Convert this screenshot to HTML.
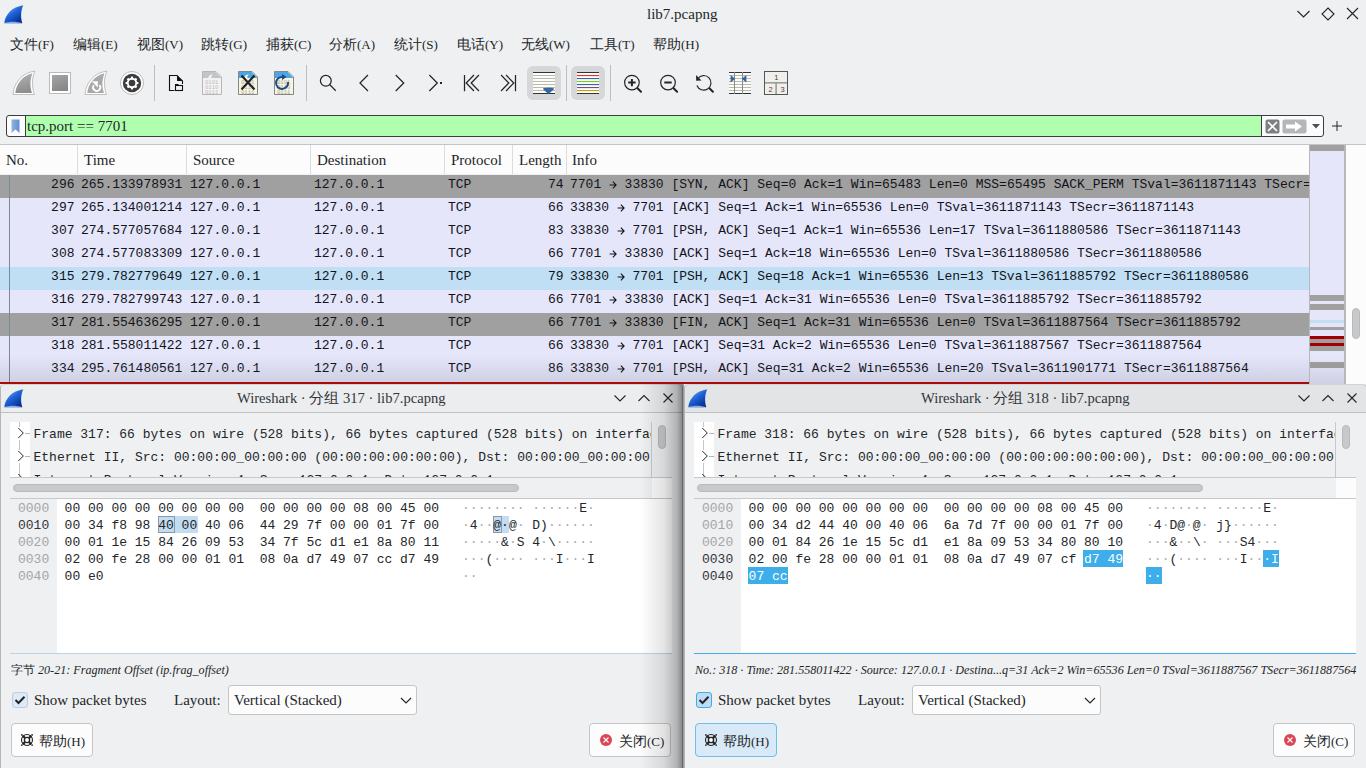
<!DOCTYPE html>
<html><head><meta charset="utf-8">
<style>
*{box-sizing:border-box;margin:0;padding:0}
html,body{width:1366px;height:768px;overflow:hidden;background:#eff0f1;font-family:"Liberation Serif",serif;color:#232629;position:relative}
.a{position:absolute}
.m{font-family:"Liberation Mono",monospace;font-size:13px;white-space:pre;line-height:15px}
.s{font-family:"Liberation Serif",serif;white-space:pre}
.menu span{position:absolute;top:37px;font-size:14px;white-space:pre;line-height:16px}
.row{position:absolute;left:0;width:1310px;height:23px;background:#e6e6fa;color:#12141a}
.row .m{position:absolute;top:2px}
.hdr{position:absolute;top:145px;height:29px;background:#fcfcfc;font-size:15px}
.hdr span{position:absolute;top:7px;white-space:pre}
.hdr i{position:absolute;top:0;width:1px;height:29px;background:#dcdcdc}
.sep{position:absolute;top:65px;width:1px;height:36px;background:#bcbebf}
svg{position:absolute;overflow:visible}
svg.ar{position:relative;vertical-align:-1.5px}
</style></head><body>
<svg style="left:4px;top:5px" width="20" height="19" viewBox="0 0 20 19">
<defs><linearGradient id="fin0" x1="0.2" y1="0" x2="0.9" y2="0.9"><stop offset="0" stop-color="#6ab0f8"/><stop offset="0.45" stop-color="#1f63d8"/><stop offset="1" stop-color="#022a8c"/></linearGradient></defs>
<path d="M0.3 18.3 C1 9.5 8 2 19.3 0.3 C17 5 16.3 12 18.3 18.3 Z" fill="url(#fin0)"/>
<path d="M0.3 18.3 C5 16.3 13 16.3 18.3 18.3 Z" fill="#a9c4ee" opacity="0.8"/>
</svg><div class="a s" style="left:647px;top:5px;font-size:15px;line-height:18px">lib7.pcapng</div><svg style="left:1296px;top:6px" width="64" height="16" viewBox="0 0 64 16" fill="none" stroke="#232629" stroke-width="1.1">
<path d="M1.5 5 L7.5 11 L13.5 5"/>
<path d="M32 2 L38 8 L32 14 L26 8 Z"/>
<path d="M51 2 L62 13 M62 2 L51 13"/>
</svg><div class="menu"><span style="left:10px">文件<b style="font-weight:normal;font-size:13px">(F)</b></span><span style="left:73px">编辑<b style="font-weight:normal;font-size:13px">(E)</b></span><span style="left:137px">视图<b style="font-weight:normal;font-size:13px">(V)</b></span><span style="left:201px">跳转<b style="font-weight:normal;font-size:13px">(G)</b></span><span style="left:266px">捕获<b style="font-weight:normal;font-size:13px">(C)</b></span><span style="left:329px">分析<b style="font-weight:normal;font-size:13px">(A)</b></span><span style="left:394px">统计<b style="font-weight:normal;font-size:13px">(S)</b></span><span style="left:457px">电话<b style="font-weight:normal;font-size:13px">(Y)</b></span><span style="left:521px">无线<b style="font-weight:normal;font-size:13px">(W)</b></span><span style="left:590px">工具<b style="font-weight:normal;font-size:13px">(T)</b></span><span style="left:653px">帮助<b style="font-weight:normal;font-size:13px">(H)</b></span></div><svg style="left:0;top:60px" width="800" height="45" viewBox="0 60 800 45">
<defs>
<linearGradient id="gfin" x1="0" y1="0" x2="0.3" y2="1"><stop offset="0" stop-color="#b4b4b4"/><stop offset="1" stop-color="#8e8e8e"/></linearGradient>
<linearGradient id="gsq" x1="0" y1="0" x2="0.4" y2="1"><stop offset="0" stop-color="#a6a6a6"/><stop offset="1" stop-color="#888"/></linearGradient>
</defs>
<!-- 1 fin -->
<path d="M13 94.5 C13.5 84 21 73 35 71 C32 77 31.5 87 34.5 94.5 Z" fill="#fff" stroke="#b0b0b0" stroke-width="0.8"/>
<path d="M15.3 93 C16 85 22 75.5 32.5 73.3 C30 79 29.7 87 32 93 Z" fill="url(#gfin)"/>
<!-- 2 square -->
<rect x="49.5" y="72.5" width="21" height="21" fill="#fff" stroke="#b4b4b4" stroke-width="0.9"/>
<rect x="52" y="75" width="16" height="16" fill="url(#gsq)"/>
<!-- 3 fin restart -->
<path d="M85 94.5 C85.5 84 93 73 107 71 C104 77 103.5 87 106.5 94.5 Z" fill="#fff" stroke="#b0b0b0" stroke-width="0.8"/>
<path d="M87.3 93 C88 85 94 75.5 104.5 73.3 C102 79 101.7 87 104 93 Z" fill="#a9a9a9"/>
<path d="M99.46 84.99 A3.6 3.6 0 1 1 93.75 85.24" fill="none" stroke="#fff" stroke-width="1.8"/>
<path d="M91.8 81.2 L97.9 81.2 L97.7 87.6 Z" fill="#fff"/>
<!-- 4 gear -->
<circle cx="132" cy="83" r="11.5" fill="#fff" stroke="#a8a8a8" stroke-width="0.8"/>
<circle cx="132" cy="83" r="9.2" fill="#3c3c3c"/>
<g fill="#fff">
<circle cx="132" cy="83" r="5.2"/>
<g><rect x="130.9" y="76.6" width="2.2" height="12.8"/><rect x="125.6" y="81.9" width="12.8" height="2.2"/></g>
<g transform="rotate(45 132 83)"><rect x="130.9" y="76.6" width="2.2" height="12.8"/><rect x="125.6" y="81.9" width="12.8" height="2.2"/></g>
</g>
<circle cx="132" cy="83" r="3.3" fill="#3c3c3c"/>
<!-- sep -->
<rect x="154" y="65" width="1" height="36" fill="#bcbebf"/>
<!-- 5 open -->
<path d="M174.5 90.5 H169.5 V75.5 H177 L182.5 81 V84" fill="none" stroke="#111" stroke-width="1.1"/>
<path d="M177 75.5 L182.5 81 H177 Z" fill="#111"/>
<rect x="175.5" y="85.5" width="7" height="5" fill="none" stroke="#111" stroke-width="1.1"/>
<rect x="175" y="84" width="3.5" height="2" fill="#111"/>
<!-- 6 doc gray -->
<path d="M202.5 71.5 H216 L221.5 77 V94.5 H202.5 Z" fill="#f2f2f2" stroke="#b0b0b0" stroke-width="0.9"/>
<path d="M203 72 H215.5 L221 77.5 V78 H203 Z" fill="#c4c4c4"/>
<path d="M208 78 C209 75 211 74 213 74.5 C211.5 75.5 211 77 211.5 78 Z" fill="#f2f2f2"/>
<g font-family="Liberation Mono" font-size="5.6" fill="#c0c0c0"><text x="205" y="83.5">0101</text><text x="205" y="88.5">0110</text><text x="205" y="93.5">0111</text></g>
<!-- 7 doc close -->
<path d="M238.5 71.5 H252 L257.5 77 V94.5 H238.5 Z" fill="#f7f5e2" stroke="#7a7a7a" stroke-width="0.9"/>
<path d="M239 72 H251.5 L257 77.5 V78 H239 Z" fill="#4aa6e6"/>
<path d="M244 78 C245 75 247 74 249 74.5 C247.5 75.5 247 77 247.5 78 Z" fill="#f7f5e2"/>
<g font-family="Liberation Mono" font-size="5.6" fill="#a8a89a"><text x="241" y="83.5">0101</text><text x="241" y="88.5">0110</text><text x="241" y="93.5">0111</text></g>
<path d="M241.5 75.5 L254.5 89.5 M254.5 75.5 L241.5 89.5" stroke="#222" stroke-width="2.1"/>
<!-- 8 doc reload -->
<path d="M274.5 71.5 H288 L293.5 77 V94.5 H274.5 Z" fill="#f7f5e2" stroke="#7a7a7a" stroke-width="0.9"/>
<path d="M275 72 H287.5 L293 77.5 V78 H275 Z" fill="#4aa6e6"/>
<g font-family="Liberation Mono" font-size="5.6" fill="#a8a89a"><text x="277" y="83.5">0101</text><text x="277" y="88.5">0110</text><text x="277" y="93.5">0111</text></g>
<path d="M288 82 A6 6 0 1 1 283 77" fill="none" stroke="#204a87" stroke-width="2"/>
<path d="M282 74 L286.5 77 L282 80 Z" fill="#204a87"/>
<!-- sep -->
<rect x="306" y="65" width="1" height="36" fill="#bcbebf"/>
<g fill="none" stroke="#232629" stroke-width="1.25" stroke-linecap="square">
<!-- 9 find -->
<circle cx="325.8" cy="80.8" r="5.4"/>
<path d="M329.8 84.8 L335.3 90.3"/>
<!-- 10 < -->
<path d="M367.5 75.5 L360 83 L367.5 90.5"/>
<!-- 11 > -->
<path d="M396.2 75.5 L403.7 83 L396.2 90.5"/>
<!-- 12 >. -->
<path d="M429.8 75.5 L437.3 83 L429.8 90.5"/>
<!-- 13 |<< -->
<path d="M464.5 75.5 V90.5 M473.5 75.5 L466.2 83 L473.5 90.5 M478.5 75.5 L471.2 83 L478.5 90.5"/>
<!-- 14 >>| -->
<path d="M515.5 75.5 V90.5 M501.5 75.5 L508.8 83 L501.5 90.5 M506.5 75.5 L513.8 83 L506.5 90.5"/>
</g>
<rect x="440" y="82" width="2" height="2" fill="#232629"/>
<!-- 15 autoscroll pressed -->
<rect x="527" y="66" width="34" height="34" rx="6" fill="#d6d7d9"/>
<rect x="533" y="72" width="22" height="22" fill="#fcfcfa"/>
<g fill="#b9b9ad"><rect x="533" y="75" width="22" height="1"/><rect x="533" y="78" width="22" height="1"/><rect x="533" y="81" width="22" height="1"/><rect x="533" y="84" width="22" height="1"/><rect x="533" y="87" width="22" height="1"/><rect x="533" y="90" width="22" height="1"/></g>
<rect x="533" y="72" width="22" height="1" fill="#2e3436"/><rect x="533" y="93" width="22" height="1" fill="#2e3436"/>
<path d="M543 88.5 C543 87.5 554 87.5 554 88.5 C554 90 550.5 92 548.5 94 C546.5 92 543 90 543 88.5 Z" fill="#3465a4"/>
<!-- sep -->
<rect x="566" y="65" width="1" height="36" fill="#bcbebf"/>
<!-- 16 colorize pressed -->
<rect x="571" y="66" width="34" height="34" rx="6" fill="#d6d7d9"/>
<rect x="577" y="72" width="22" height="22" fill="#fcfcfa"/>
<rect x="577" y="72" width="22" height="1" fill="#2e3436"/>
<rect x="577" y="75" width="22" height="1.1" fill="#ef2929"/>
<rect x="577" y="78" width="22" height="1.1" fill="#3465a4"/>
<rect x="577" y="81" width="22" height="1.1" fill="#73d216"/>
<rect x="577" y="84" width="22" height="1.1" fill="#3465a4"/>
<rect x="577" y="87" width="22" height="1.1" fill="#75507b"/>
<rect x="577" y="90" width="22" height="1.1" fill="#c4a000"/>
<rect x="577" y="93" width="22" height="1" fill="#2e3436"/>
<!-- sep -->
<rect x="610" y="65" width="1" height="36" fill="#bcbebf"/>
<!-- 17-19 zoom -->
<g fill="none" stroke="#232629" stroke-width="1.2">
<circle cx="631.9" cy="82.6" r="7.3"/>
<circle cx="668" cy="82.6" r="7.3"/>
<path d="M696.9 85.5 A7.3 7.3 0 1 0 697.8 78.5"/>
</g>
<g stroke="#232629" stroke-width="2" stroke-linecap="round">
<path d="M637.5 88.2 L641 91.7 M673.6 88.2 L677.1 91.7 M709.4 88.2 L712.9 91.7"/>
<path d="M628.2 82.6 H635.6 M631.9 78.9 V86.3 M664.3 82.6 H671.7" stroke-linecap="butt"/>
</g>
<path d="M696 75 L696.2 80.8 L701.5 80.6 Z" fill="#232629"/>
<!-- 20 resize cols -->
<rect x="729" y="72" width="22" height="22" fill="#fcfcfa"/>
<g fill="#b9b9ad"><rect x="729" y="75" width="22" height="1"/><rect x="729" y="78" width="22" height="1"/><rect x="729" y="81" width="22" height="1"/><rect x="729" y="84" width="22" height="1"/><rect x="729" y="87" width="22" height="1"/><rect x="729" y="90" width="22" height="1"/></g>
<rect x="729" y="72" width="22" height="1" fill="#2e3436"/><rect x="729" y="93" width="22" height="1" fill="#2e3436"/>
<rect x="734" y="72" width="1" height="22" fill="#888a85"/><rect x="742" y="72" width="1" height="22" fill="#888a85"/>
<path d="M730.6 75 L735.2 78.8 L730.6 82.6 Z M746.4 75 L741.8 78.8 L746.4 82.6 Z" fill="#3465a4"/>
<!-- 21 layout -->
<rect x="764.5" y="71.5" width="23" height="23" fill="#f0efec" stroke="#555753" stroke-width="1"/>
<rect x="765" y="82" width="22" height="1.6" fill="#9a9c98"/>
<rect x="775.3" y="83" width="1.6" height="11" fill="#9a9c98"/>
<g font-family="Liberation Sans" font-size="7.5" fill="#444"><text x="774.2" y="80">1</text><text x="768.5" y="91.5">2</text><text x="780.5" y="91.5">3</text></g>
</svg>
<div class="a" style="left:6px;top:115px;width:1318px;height:22px;border:1px solid #3b3d3f;border-radius:3px;background:#fcfcfc;overflow:hidden">
 <div class="a" style="left:18px;top:0;width:1237px;height:20px;background:#afffaf;border-left:1px solid #3b3d3f;border-right:1px solid #3b3d3f"></div>
 <svg style="left:4px;top:3px" width="10" height="15" viewBox="0 0 10 15"><defs><linearGradient id="bm" x1="0" y1="0" x2="1" y2="0"><stop offset="0" stop-color="#8fb4e3"/><stop offset="1" stop-color="#5f8fcf"/></linearGradient></defs><path d="M0.5 0.5 H8.5 V14 L4.5 10.5 L0.5 14 Z" fill="url(#bm)"/></svg>
 <div class="a s" style="left:20px;top:1px;font-size:15px;line-height:19px;color:#232629">tcp.port == 7701</div>
 <svg style="left:1258px;top:3px" width="16" height="15" viewBox="0 0 16 15"><rect x="0.5" y="0.5" width="14" height="14" rx="2" fill="#7e8082"/><path d="M3 3 L12 12 M12 3 L3 12" stroke="#fff" stroke-width="1.6"/></svg>
 <svg style="left:1275px;top:3px" width="25" height="15" viewBox="0 0 25 15"><rect x="0.5" y="0.5" width="24" height="14" rx="2" fill="#b4b6b8"/><path d="M4 5.5 H13 V2.5 L20 7.5 L13 12.5 V9.5 H4 Z" fill="#fff"/></svg>
 <svg style="left:1305px;top:8px" width="8" height="5" viewBox="0 0 8 5"><path d="M0 0 H8 L4 4.5 Z" fill="#4d4f51"/></svg>
</div>
<svg style="left:1331px;top:120px" width="12" height="12" viewBox="0 0 12 12"><path d="M6 1 V11 M1 6 H11" stroke="#232629" stroke-width="1"/></svg><div class="a" style="left:0;top:144px;width:1366px;height:1px;background:#c2c4c6"></div><div class="hdr" style="left:0;width:1310px">
 <span style="left:6px">No.</span><i style="left:77px"></i>
 <span style="left:84px">Time</span><i style="left:186px"></i>
 <span style="left:193px">Source</span><i style="left:310px"></i>
 <span style="left:317px">Destination</span><i style="left:444px"></i>
 <span style="left:451px">Protocol</span><i style="left:512px"></i>
 <span style="left:519px">Length</span><i style="left:566px"></i>
 <span style="left:572px">Info</span>
</div><div class="a" style="left:0;top:175px;width:1310px;height:207px;overflow:hidden"><div class="row" style="top:0px;background:#a0a0a0"><span class="m" style="left:51.1px">296</span><span class="m" style="left:81px">265.133978931</span><span class="m" style="left:190px">127.0.0.1</span><span class="m" style="left:314px">127.0.0.1</span><span class="m" style="left:448px">TCP</span><span class="m" style="left:547.9px">74</span><span class="m" style="left:570px">7701 <svg class="ar" width="7.8" height="10" viewBox="0 0 7.8 10"><path d="M0.6 5 H7 M3.9 1.7 L7.1 5 L3.9 8.3" stroke="#12141a" stroke-width="1.1" fill="none"/></svg> 33830 [SYN, ACK] Seq=0 Ack=1 Win=65483 Len=0 MSS=65495 SACK_PERM TSval=3611871143 TSecr=3611871143</span></div><div class="row" style="top:23px;background:#e6e6fa"><span class="m" style="left:51.1px">297</span><span class="m" style="left:81px">265.134001214</span><span class="m" style="left:190px">127.0.0.1</span><span class="m" style="left:314px">127.0.0.1</span><span class="m" style="left:448px">TCP</span><span class="m" style="left:547.9px">66</span><span class="m" style="left:570px">33830 <svg class="ar" width="7.8" height="10" viewBox="0 0 7.8 10"><path d="M0.6 5 H7 M3.9 1.7 L7.1 5 L3.9 8.3" stroke="#12141a" stroke-width="1.1" fill="none"/></svg> 7701 [ACK] Seq=1 Ack=1 Win=65536 Len=0 TSval=3611871143 TSecr=3611871143</span></div><div class="row" style="top:46px;background:#e6e6fa"><span class="m" style="left:51.1px">307</span><span class="m" style="left:81px">274.577057684</span><span class="m" style="left:190px">127.0.0.1</span><span class="m" style="left:314px">127.0.0.1</span><span class="m" style="left:448px">TCP</span><span class="m" style="left:547.9px">83</span><span class="m" style="left:570px">33830 <svg class="ar" width="7.8" height="10" viewBox="0 0 7.8 10"><path d="M0.6 5 H7 M3.9 1.7 L7.1 5 L3.9 8.3" stroke="#12141a" stroke-width="1.1" fill="none"/></svg> 7701 [PSH, ACK] Seq=1 Ack=1 Win=65536 Len=17 TSval=3611880586 TSecr=3611871143</span></div><div class="row" style="top:69px;background:#e6e6fa"><span class="m" style="left:51.1px">308</span><span class="m" style="left:81px">274.577083309</span><span class="m" style="left:190px">127.0.0.1</span><span class="m" style="left:314px">127.0.0.1</span><span class="m" style="left:448px">TCP</span><span class="m" style="left:547.9px">66</span><span class="m" style="left:570px">7701 <svg class="ar" width="7.8" height="10" viewBox="0 0 7.8 10"><path d="M0.6 5 H7 M3.9 1.7 L7.1 5 L3.9 8.3" stroke="#12141a" stroke-width="1.1" fill="none"/></svg> 33830 [ACK] Seq=1 Ack=18 Win=65536 Len=0 TSval=3611880586 TSecr=3611880586</span></div><div class="row" style="top:92px;background:#c0def4"><span class="m" style="left:51.1px">315</span><span class="m" style="left:81px">279.782779649</span><span class="m" style="left:190px">127.0.0.1</span><span class="m" style="left:314px">127.0.0.1</span><span class="m" style="left:448px">TCP</span><span class="m" style="left:547.9px">79</span><span class="m" style="left:570px">33830 <svg class="ar" width="7.8" height="10" viewBox="0 0 7.8 10"><path d="M0.6 5 H7 M3.9 1.7 L7.1 5 L3.9 8.3" stroke="#12141a" stroke-width="1.1" fill="none"/></svg> 7701 [PSH, ACK] Seq=18 Ack=1 Win=65536 Len=13 TSval=3611885792 TSecr=3611880586</span></div><div class="row" style="top:115px;background:#e6e6fa"><span class="m" style="left:51.1px">316</span><span class="m" style="left:81px">279.782799743</span><span class="m" style="left:190px">127.0.0.1</span><span class="m" style="left:314px">127.0.0.1</span><span class="m" style="left:448px">TCP</span><span class="m" style="left:547.9px">66</span><span class="m" style="left:570px">7701 <svg class="ar" width="7.8" height="10" viewBox="0 0 7.8 10"><path d="M0.6 5 H7 M3.9 1.7 L7.1 5 L3.9 8.3" stroke="#12141a" stroke-width="1.1" fill="none"/></svg> 33830 [ACK] Seq=1 Ack=31 Win=65536 Len=0 TSval=3611885792 TSecr=3611885792</span></div><div class="row" style="top:138px;background:#a0a0a0"><span class="m" style="left:51.1px">317</span><span class="m" style="left:81px">281.554636295</span><span class="m" style="left:190px">127.0.0.1</span><span class="m" style="left:314px">127.0.0.1</span><span class="m" style="left:448px">TCP</span><span class="m" style="left:547.9px">66</span><span class="m" style="left:570px">7701 <svg class="ar" width="7.8" height="10" viewBox="0 0 7.8 10"><path d="M0.6 5 H7 M3.9 1.7 L7.1 5 L3.9 8.3" stroke="#12141a" stroke-width="1.1" fill="none"/></svg> 33830 [FIN, ACK] Seq=1 Ack=31 Win=65536 Len=0 TSval=3611887564 TSecr=3611885792</span></div><div class="row" style="top:161px;background:#e6e6fa"><span class="m" style="left:51.1px">318</span><span class="m" style="left:81px">281.558011422</span><span class="m" style="left:190px">127.0.0.1</span><span class="m" style="left:314px">127.0.0.1</span><span class="m" style="left:448px">TCP</span><span class="m" style="left:547.9px">66</span><span class="m" style="left:570px">33830 <svg class="ar" width="7.8" height="10" viewBox="0 0 7.8 10"><path d="M0.6 5 H7 M3.9 1.7 L7.1 5 L3.9 8.3" stroke="#12141a" stroke-width="1.1" fill="none"/></svg> 7701 [ACK] Seq=31 Ack=2 Win=65536 Len=0 TSval=3611887567 TSecr=3611887564</span></div><div class="row" style="top:184px;background:#e6e6fa"><span class="m" style="left:51.1px">334</span><span class="m" style="left:81px">295.761480561</span><span class="m" style="left:190px">127.0.0.1</span><span class="m" style="left:314px">127.0.0.1</span><span class="m" style="left:448px">TCP</span><span class="m" style="left:547.9px">86</span><span class="m" style="left:570px">33830 <svg class="ar" width="7.8" height="10" viewBox="0 0 7.8 10"><path d="M0.6 5 H7 M3.9 1.7 L7.1 5 L3.9 8.3" stroke="#12141a" stroke-width="1.1" fill="none"/></svg> 7701 [PSH, ACK] Seq=31 Ack=2 Win=65536 Len=20 TSval=3611901771 TSecr=3611887564</span></div><div class="a" style="left:9px;top:0;width:1px;height:207px;background:#7a8a94"></div><div class="a" style="left:0;top:180px;width:1310px;height:27px;background:linear-gradient(rgba(60,60,90,0),rgba(60,60,90,0.13))"></div></div><div class="a" style="left:1309px;top:145px;width:1px;height:239px;background:#b8b8b8"></div><div class="a" style="left:1310px;top:145px;width:34px;height:239px;background:#e6e6fa;overflow:hidden"><div class="a" style="left:0;top:0px;width:34px;height:6px;background:#a0a0a0"></div><div class="a" style="left:0;top:150px;width:34px;height:6px;background:#a0a0a0"></div><div class="a" style="left:0;top:159px;width:34px;height:6px;background:#a0a0a0"></div><div class="a" style="left:0;top:175px;width:34px;height:3px;background:#c0def4"></div><div class="a" style="left:0;top:182px;width:34px;height:3px;background:#a0a0a0"></div><div class="a" style="left:0;top:191px;width:34px;height:3px;background:#a40000"></div><div class="a" style="left:0;top:194px;width:34px;height:4px;background:#a0a0a0"></div><div class="a" style="left:0;top:198px;width:34px;height:3px;background:#a40000"></div><div class="a" style="left:0;top:201px;width:34px;height:5px;background:#a0a0a0"></div><div class="a" style="left:0;top:217px;width:34px;height:6px;background:#a0a0a0"></div><div class="a" style="left:0;top:212px;width:34px;height:27px;background:linear-gradient(rgba(60,60,90,0),rgba(60,60,90,0.13))"></div></div><div class="a" style="left:1344px;top:145px;width:2px;height:239px;background:#b8b8b8"></div><div class="a" style="left:1346px;top:145px;width:20px;height:239px;background:#fcfcfc"></div><div class="a" style="left:1352px;top:308px;width:8px;height:31px;border-radius:4px;background:#c8c9ca;border:1px solid #b9babb"></div><div class="a" style="left:0;top:382px;width:1309px;height:2px;background:#a80a0a"></div><div class="a" style="left:0px;top:384px;width:683px;height:384px;background:#eff0f1;overflow:hidden;border-radius:4px 4px 0 0"><div class="a" style="left:0;top:0;width:683px;height:29px;background:#ecedee;border-bottom:1px solid #bfc1c3;border-radius:4px 4px 0 0"></div><svg style="left:4px;top:5px" width="20" height="19" viewBox="0 0 20 19"><path d="M0.3 18.3 C1 9.5 8 2 19.3 0.3 C17 5 16.3 12 18.3 18.3 Z" fill="url(#fin0)"/><path d="M0.3 18.3 C5 16.3 13 16.3 18.3 18.3 Z" fill="#a9c4ee" opacity="0.8"/></svg><div class="a s" style="left:237px;top:5px;font-size:14.6px;line-height:18px;color:#31363b">Wireshark · 分组 317 · lib7.pcapng</div><svg style="left:613px;top:8px" width="64" height="14" viewBox="0 0 64 14" fill="none" stroke="#232629" stroke-width="1.1">
<path d="M1.5 3.5 L7 9 L12.5 3.5"/><path d="M25.5 9 L31 3.5 L36.5 9"/><path d="M50.5 1.5 L59.5 10.5 M59.5 1.5 L50.5 10.5"/></svg><div class="a" style="left:10px;top:38px;width:20px;height:55px;background:#fff"></div><div class="a" style="left:19px;top:38px;width:1px;height:5px;background:#c4c6c8"></div><div class="a" style="left:19px;top:56px;width:1px;height:10px;background:#c4c6c8"></div><div class="a" style="left:19px;top:79px;width:1px;height:14px;background:#c4c6c8"></div><div class="a" style="left:10px;top:38px;width:641px;height:55px;overflow:hidden"><svg style="left:7px;top:6px" width="14" height="12" viewBox="0 0 14 12" fill="none" stroke="#232629" stroke-width="1"><path d="M1.3 0 L6.3 5 L1.3 10"/><path d="M8 5.5 H13" stroke="#b4b6b8"/></svg><div class="a m" style="left:23.5px;top:4px;color:#232629;line-height:17px">Frame 317: 66 bytes on wire (528 bits), 66 bytes captured (528 bits) on interface lo, id 0</div><svg style="left:7px;top:29px" width="14" height="12" viewBox="0 0 14 12" fill="none" stroke="#232629" stroke-width="1"><path d="M1.3 0 L6.3 5 L1.3 10"/><path d="M8 5.5 H13" stroke="#b4b6b8"/></svg><div class="a m" style="left:23.5px;top:27px;color:#232629;line-height:17px">Ethernet II, Src: 00:00:00_00:00:00 (00:00:00:00:00:00), Dst: 00:00:00_00:00:00 (00:00:00:00:00:00)</div><svg style="left:7px;top:52px" width="14" height="12" viewBox="0 0 14 12" fill="none" stroke="#232629" stroke-width="1"><path d="M1.3 0 L6.3 5 L1.3 10"/><path d="M8 5.5 H13" stroke="#b4b6b8"/></svg><div class="a m" style="left:23.5px;top:50px;color:#232629;line-height:17px">Internet Protocol Version 4, Src: 127.0.0.1, Dst: 127.0.0.1</div></div><div class="a" style="left:10px;top:93px;width:662px;height:1px;background:#c7c8c9"></div><div class="a" style="left:651px;top:38px;width:1px;height:55px;background:#c7c8c9"></div><div class="a" style="left:652px;top:38px;width:20px;height:55px;background:#eff0f1"></div><div class="a" style="left:658px;top:41px;width:8px;height:24px;border-radius:4px;background:#c8c9ca;border:1px solid #b8b9ba"></div><div class="a" style="left:10px;top:94px;width:642px;height:20px;background:#eff0f1"></div><div class="a" style="left:652px;top:94px;width:20px;height:20px;background:#fcfcfc"></div><div class="a" style="left:13px;top:100px;width:506px;height:8px;border-radius:4px;background:#c8c9ca;border:1px solid #b8b9ba"></div><div class="a" style="left:10px;top:114px;width:662px;height:1px;background:#c7c8c9"></div><div class="a" style="left:10px;top:115px;width:47px;height:154px;background:#eff0f1"></div><div class="a" style="left:57px;top:115px;width:615px;height:154px;background:#fff"></div><div class="a" style="left:10px;top:269px;width:662px;height:1px;background:#b9d4ea"></div><div class="a" style="left:158px;top:132px;width:40px;height:17px;background:#c2dcf2"></div><div class="a" style="left:158px;top:132px;width:17px;height:17px;border:1px solid #8d98a2"></div><div class="a" style="left:493px;top:132px;width:16px;height:17px;background:#c2dcf2"></div><div class="a" style="left:493px;top:132px;width:8.5px;height:17px;border:1px solid #8d98a2"></div><div class="a m" style="left:18px;top:116px;line-height:17px;color:#a4a6a8">0000</div><div class="a m" style="left:64.6px;top:116px;line-height:17px;color:#232629">00 00 00 00 00 00 00 00  00 00 00 00 08 00 45 00</div><div class="a m" style="left:18px;top:133px;line-height:17px;color:#31363b">0010</div><div class="a m" style="left:64.6px;top:133px;line-height:17px;color:#232629">00 34 f8 98 40 00 40 06  44 29 7f 00 00 01 7f 00</div><div class="a m" style="left:18px;top:150px;line-height:17px;color:#a4a6a8">0020</div><div class="a m" style="left:64.6px;top:150px;line-height:17px;color:#232629">00 01 1e 15 84 26 09 53  34 7f 5c d1 e1 8a 80 11</div><div class="a m" style="left:18px;top:167px;line-height:17px;color:#a4a6a8">0030</div><div class="a m" style="left:64.6px;top:167px;line-height:17px;color:#232629">02 00 fe 28 00 00 01 01  08 0a d7 49 07 cc d7 49</div><div class="a m" style="left:18px;top:184px;line-height:17px;color:#a4a6a8">0040</div><div class="a m" style="left:64.6px;top:184px;line-height:17px;color:#232629">00 e0</div><div class="a m" style="left:462px;top:116px;line-height:17px"><span style="color:#a8aaac">·</span><span style="color:#a8aaac">·</span><span style="color:#a8aaac">·</span><span style="color:#a8aaac">·</span><span style="color:#a8aaac">·</span><span style="color:#a8aaac">·</span><span style="color:#a8aaac">·</span><span style="color:#a8aaac">·</span> <span style="color:#a8aaac">·</span><span style="color:#a8aaac">·</span><span style="color:#a8aaac">·</span><span style="color:#a8aaac">·</span><span style="color:#a8aaac">·</span><span style="color:#a8aaac">·</span>E<span style="color:#a8aaac">·</span></div><div class="a m" style="left:462px;top:133px;line-height:17px"><span style="color:#a8aaac">·</span>4<span style="color:#a8aaac">·</span><span style="color:#a8aaac">·</span>@<span style="color:#232629">·</span>@<span style="color:#a8aaac">·</span> D)<span style="color:#a8aaac">·</span><span style="color:#a8aaac">·</span><span style="color:#a8aaac">·</span><span style="color:#a8aaac">·</span><span style="color:#a8aaac">·</span><span style="color:#a8aaac">·</span></div><div class="a m" style="left:462px;top:150px;line-height:17px"><span style="color:#a8aaac">·</span><span style="color:#a8aaac">·</span><span style="color:#a8aaac">·</span><span style="color:#a8aaac">·</span><span style="color:#a8aaac">·</span>&amp;<span style="color:#a8aaac">·</span>S 4<span style="color:#a8aaac">·</span>\<span style="color:#a8aaac">·</span><span style="color:#a8aaac">·</span><span style="color:#a8aaac">·</span><span style="color:#a8aaac">·</span><span style="color:#a8aaac">·</span></div><div class="a m" style="left:462px;top:167px;line-height:17px"><span style="color:#a8aaac">·</span><span style="color:#a8aaac">·</span><span style="color:#a8aaac">·</span>(<span style="color:#a8aaac">·</span><span style="color:#a8aaac">·</span><span style="color:#a8aaac">·</span><span style="color:#a8aaac">·</span> <span style="color:#a8aaac">·</span><span style="color:#a8aaac">·</span><span style="color:#a8aaac">·</span>I<span style="color:#a8aaac">·</span><span style="color:#a8aaac">·</span><span style="color:#a8aaac">·</span>I</div><div class="a m" style="left:462px;top:184px;line-height:17px"><span style="color:#a8aaac">·</span><span style="color:#a8aaac">·</span></div><div class="a s" style="left:11px;top:278px;font-size:12.1px;font-style:italic;line-height:16px;color:#232629"><span style="font-style:normal">字节</span> 20-21: Fragment Offset (ip.frag_offset)</div><div class="a" style="left:12px;top:308px;width:16px;height:16px;border-radius:3px;background:#dfe9f3;border:1px solid #b8d0e6"></div><svg style="left:14px;top:311px" width="12" height="10" viewBox="0 0 12 10"><path d="M1.5 5 L4.5 8 L10.5 1.8" fill="none" stroke="#232629" stroke-width="2"/></svg><div class="a s" style="left:34px;top:307px;font-size:15px;line-height:18px">Show packet bytes</div><div class="a s" style="left:174px;top:307px;font-size:15px;line-height:18px">Layout:</div><div class="a" style="left:228px;top:301px;width:189px;height:30px;border-radius:3px;background:#fcfcfc;border:1px solid #c4c5c6"></div><div class="a s" style="left:234px;top:307px;font-size:15px;line-height:18px">Vertical (Stacked)</div><svg style="left:400px;top:313px" width="12" height="7" viewBox="0 0 12 7"><path d="M1 1 L6 6 L11 1" fill="none" stroke="#232629" stroke-width="1.2"/></svg><div class="a" style="left:11px;top:339px;width:82px;height:34px;border-radius:4px;background:#fcfcfc;border:1px solid #c4c5c6"></div><svg style="left:21px;top:350px" width="12" height="12" viewBox="0 0 12 12" fill="none" stroke="#232629"><circle cx="6" cy="6" r="5.5" stroke-width="1.1"/><circle cx="6" cy="6" r="2.6" stroke-width="1.3"/><path d="M1.8 1.8 L10.2 10.2 M10.2 1.8 L1.8 10.2" stroke-width="2.3"/><circle cx="6" cy="6" r="1.9" fill="#fff" stroke="none"/><g fill="#232629" stroke="none"><circle cx="0.9" cy="0.9" r="0.9"/><circle cx="11.1" cy="0.9" r="0.9"/><circle cx="0.9" cy="11.1" r="0.9"/><circle cx="11.1" cy="11.1" r="0.9"/></g></svg><div class="a s" style="left:39px;top:349px;font-size:14px;line-height:18px">帮助<span style="font-size:13px">(H)</span></div><div class="a" style="left:589px;top:339px;width:82px;height:34px;border-radius:4px;background:#fcfcfc;border:1px solid #c4c5c6"></div><svg style="left:600px;top:350px" width="12" height="12" viewBox="0 0 12 12"><circle cx="6" cy="6" r="6" fill="#da4453"/><path d="M3.5 3.5 L8.5 8.5 M8.5 3.5 L3.5 8.5" stroke="#fff" stroke-width="1.1"/></svg><div class="a s" style="left:619px;top:349px;font-size:14px;line-height:18px">关闭<span style="font-size:13px">(C)</span></div><div class="a" style="left:0;top:0;width:100%;height:100%;border-left:1px solid #b4b6b8;border-right:1px solid #b4b6b8;border-top:1px solid #d0d2d4;border-radius:4px 4px 0 0"></div></div><div class="a" style="left:684px;top:384px;width:683px;height:384px;background:#eff0f1;overflow:hidden;border-radius:4px 4px 0 0"><div class="a" style="left:0;top:0;width:683px;height:29px;background:#e3e4e6;border-bottom:1px solid #bfc1c3;border-radius:4px 4px 0 0"></div><svg style="left:4px;top:5px" width="20" height="19" viewBox="0 0 20 19"><path d="M0.3 18.3 C1 9.5 8 2 19.3 0.3 C17 5 16.3 12 18.3 18.3 Z" fill="url(#fin0)"/><path d="M0.3 18.3 C5 16.3 13 16.3 18.3 18.3 Z" fill="#a9c4ee" opacity="0.8"/></svg><div class="a s" style="left:237px;top:5px;font-size:14.6px;line-height:18px;color:#31363b">Wireshark · 分组 318 · lib7.pcapng</div><svg style="left:613px;top:8px" width="64" height="14" viewBox="0 0 64 14" fill="none" stroke="#232629" stroke-width="1.1">
<path d="M1.5 3.5 L7 9 L12.5 3.5"/><path d="M25.5 9 L31 3.5 L36.5 9"/><path d="M50.5 1.5 L59.5 10.5 M59.5 1.5 L50.5 10.5"/></svg><div class="a" style="left:10px;top:38px;width:20px;height:55px;background:#fff"></div><div class="a" style="left:19px;top:38px;width:1px;height:5px;background:#c4c6c8"></div><div class="a" style="left:19px;top:56px;width:1px;height:10px;background:#c4c6c8"></div><div class="a" style="left:19px;top:79px;width:1px;height:14px;background:#c4c6c8"></div><div class="a" style="left:10px;top:38px;width:641px;height:55px;overflow:hidden"><svg style="left:7px;top:6px" width="14" height="12" viewBox="0 0 14 12" fill="none" stroke="#232629" stroke-width="1"><path d="M1.3 0 L6.3 5 L1.3 10"/><path d="M8 5.5 H13" stroke="#b4b6b8"/></svg><div class="a m" style="left:23.5px;top:4px;color:#232629;line-height:17px">Frame 318: 66 bytes on wire (528 bits), 66 bytes captured (528 bits) on interface lo, id 0</div><svg style="left:7px;top:29px" width="14" height="12" viewBox="0 0 14 12" fill="none" stroke="#232629" stroke-width="1"><path d="M1.3 0 L6.3 5 L1.3 10"/><path d="M8 5.5 H13" stroke="#b4b6b8"/></svg><div class="a m" style="left:23.5px;top:27px;color:#232629;line-height:17px">Ethernet II, Src: 00:00:00_00:00:00 (00:00:00:00:00:00), Dst: 00:00:00_00:00:00 (00:00:00:00:00:00)</div><svg style="left:7px;top:52px" width="14" height="12" viewBox="0 0 14 12" fill="none" stroke="#232629" stroke-width="1"><path d="M1.3 0 L6.3 5 L1.3 10"/><path d="M8 5.5 H13" stroke="#b4b6b8"/></svg><div class="a m" style="left:23.5px;top:50px;color:#232629;line-height:17px">Internet Protocol Version 4, Src: 127.0.0.1, Dst: 127.0.0.1</div></div><div class="a" style="left:10px;top:93px;width:662px;height:1px;background:#c7c8c9"></div><div class="a" style="left:651px;top:38px;width:1px;height:55px;background:#c7c8c9"></div><div class="a" style="left:652px;top:38px;width:20px;height:55px;background:#eff0f1"></div><div class="a" style="left:658px;top:41px;width:8px;height:24px;border-radius:4px;background:#c8c9ca;border:1px solid #b8b9ba"></div><div class="a" style="left:10px;top:94px;width:642px;height:20px;background:#eff0f1"></div><div class="a" style="left:652px;top:94px;width:20px;height:20px;background:#fcfcfc"></div><div class="a" style="left:13px;top:100px;width:506px;height:8px;border-radius:4px;background:#c8c9ca;border:1px solid #b8b9ba"></div><div class="a" style="left:10px;top:114px;width:662px;height:1px;background:#c7c8c9"></div><div class="a" style="left:10px;top:115px;width:47px;height:154px;background:#eff0f1"></div><div class="a" style="left:57px;top:115px;width:615px;height:154px;background:#fff"></div><div class="a" style="left:10px;top:269px;width:662px;height:1px;background:#3daee9"></div><div class="a" style="left:399px;top:166px;width:40px;height:17px;background:#3daee9"></div><div class="a" style="left:579px;top:166px;width:16px;height:17px;background:#3daee9"></div><div class="a" style="left:64px;top:183px;width:40px;height:17px;background:#3daee9"></div><div class="a" style="left:462px;top:183px;width:16px;height:17px;background:#3daee9"></div><div class="a m" style="left:18px;top:116px;line-height:17px;color:#a4a6a8">0000</div><div class="a m" style="left:64.6px;top:116px;line-height:17px;color:#232629">00 00 00 00 00 00 00 00  00 00 00 00 08 00 45 00</div><div class="a m" style="left:18px;top:133px;line-height:17px;color:#a4a6a8">0010</div><div class="a m" style="left:64.6px;top:133px;line-height:17px;color:#232629">00 34 d2 44 40 00 40 06  6a 7d 7f 00 00 01 7f 00</div><div class="a m" style="left:18px;top:150px;line-height:17px;color:#a4a6a8">0020</div><div class="a m" style="left:64.6px;top:150px;line-height:17px;color:#232629">00 01 84 26 1e 15 5c d1  e1 8a 09 53 34 80 80 10</div><div class="a m" style="left:18px;top:167px;line-height:17px;color:#31363b">0030</div><div class="a m" style="left:64.6px;top:167px;line-height:17px;color:#232629">02 00 fe 28 00 00 01 01  08 0a d7 49 07 cf <span style="color:#fff">d7 49</span></div><div class="a m" style="left:18px;top:184px;line-height:17px;color:#31363b">0040</div><div class="a m" style="left:64.6px;top:184px;line-height:17px;color:#232629"><span style="color:#fff">07 cc</span></div><div class="a m" style="left:462px;top:116px;line-height:17px"><span style="color:#a8aaac">·</span><span style="color:#a8aaac">·</span><span style="color:#a8aaac">·</span><span style="color:#a8aaac">·</span><span style="color:#a8aaac">·</span><span style="color:#a8aaac">·</span><span style="color:#a8aaac">·</span><span style="color:#a8aaac">·</span> <span style="color:#a8aaac">·</span><span style="color:#a8aaac">·</span><span style="color:#a8aaac">·</span><span style="color:#a8aaac">·</span><span style="color:#a8aaac">·</span><span style="color:#a8aaac">·</span>E<span style="color:#a8aaac">·</span></div><div class="a m" style="left:462px;top:133px;line-height:17px"><span style="color:#a8aaac">·</span>4<span style="color:#a8aaac">·</span>D@<span style="color:#a8aaac">·</span>@<span style="color:#a8aaac">·</span> j}<span style="color:#a8aaac">·</span><span style="color:#a8aaac">·</span><span style="color:#a8aaac">·</span><span style="color:#a8aaac">·</span><span style="color:#a8aaac">·</span><span style="color:#a8aaac">·</span></div><div class="a m" style="left:462px;top:150px;line-height:17px"><span style="color:#a8aaac">·</span><span style="color:#a8aaac">·</span><span style="color:#a8aaac">·</span>&amp;<span style="color:#a8aaac">·</span><span style="color:#a8aaac">·</span>\<span style="color:#a8aaac">·</span> <span style="color:#a8aaac">·</span><span style="color:#a8aaac">·</span><span style="color:#a8aaac">·</span>S4<span style="color:#a8aaac">·</span><span style="color:#a8aaac">·</span><span style="color:#a8aaac">·</span></div><div class="a m" style="left:462px;top:167px;line-height:17px"><span style="color:#a8aaac">·</span><span style="color:#a8aaac">·</span><span style="color:#a8aaac">·</span>(<span style="color:#a8aaac">·</span><span style="color:#a8aaac">·</span><span style="color:#a8aaac">·</span><span style="color:#a8aaac">·</span> <span style="color:#a8aaac">·</span><span style="color:#a8aaac">·</span><span style="color:#a8aaac">·</span>I<span style="color:#a8aaac">·</span><span style="color:#a8aaac">·</span><span style="color:#fff">·I</span></div><div class="a m" style="left:462px;top:184px;line-height:17px"><span style="color:#fff">··</span></div><div class="a s" style="left:11px;top:278px;font-size:12.1px;font-style:italic;line-height:16px;color:#232629">No.: 318 · Time: 281.558011422 · Source: 127.0.0.1 · Destina...q=31 Ack=2 Win=65536 Len=0 TSval=3611887567 TSecr=3611887564</div><div class="a" style="left:12px;top:308px;width:16px;height:16px;border-radius:3px;background:#bfdcf3;border:1px solid #3daee9"></div><svg style="left:14px;top:311px" width="12" height="10" viewBox="0 0 12 10"><path d="M1.5 5 L4.5 8 L10.5 1.8" fill="none" stroke="#232629" stroke-width="2"/></svg><div class="a s" style="left:34px;top:307px;font-size:15px;line-height:18px">Show packet bytes</div><div class="a s" style="left:174px;top:307px;font-size:15px;line-height:18px">Layout:</div><div class="a" style="left:228px;top:301px;width:189px;height:30px;border-radius:3px;background:#fcfcfc;border:1px solid #c4c5c6"></div><div class="a s" style="left:234px;top:307px;font-size:15px;line-height:18px">Vertical (Stacked)</div><svg style="left:400px;top:313px" width="12" height="7" viewBox="0 0 12 7"><path d="M1 1 L6 6 L11 1" fill="none" stroke="#232629" stroke-width="1.2"/></svg><div class="a" style="left:11px;top:339px;width:82px;height:34px;border-radius:4px;background:#d8eaf8;border:1px solid #6fbfec"></div><svg style="left:21px;top:350px" width="12" height="12" viewBox="0 0 12 12" fill="none" stroke="#232629"><circle cx="6" cy="6" r="5.5" stroke-width="1.1"/><circle cx="6" cy="6" r="2.6" stroke-width="1.3"/><path d="M1.8 1.8 L10.2 10.2 M10.2 1.8 L1.8 10.2" stroke-width="2.3"/><circle cx="6" cy="6" r="1.9" fill="#fff" stroke="none"/><g fill="#232629" stroke="none"><circle cx="0.9" cy="0.9" r="0.9"/><circle cx="11.1" cy="0.9" r="0.9"/><circle cx="0.9" cy="11.1" r="0.9"/><circle cx="11.1" cy="11.1" r="0.9"/></g></svg><div class="a s" style="left:39px;top:349px;font-size:14px;line-height:18px">帮助<span style="font-size:13px">(H)</span></div><div class="a" style="left:589px;top:339px;width:82px;height:34px;border-radius:4px;background:#fcfcfc;border:1px solid #c4c5c6"></div><svg style="left:600px;top:350px" width="12" height="12" viewBox="0 0 12 12"><circle cx="6" cy="6" r="6" fill="#da4453"/><path d="M3.5 3.5 L8.5 8.5 M8.5 3.5 L3.5 8.5" stroke="#fff" stroke-width="1.1"/></svg><div class="a s" style="left:619px;top:349px;font-size:14px;line-height:18px">关闭<span style="font-size:13px">(C)</span></div><div class="a" style="left:0;top:0;width:100%;height:100%;border-left:1px solid #b4b6b8;border-right:1px solid #b4b6b8;border-top:1px solid #d0d2d4;border-radius:4px 4px 0 0"></div></div><div class="a" style="left:640px;top:384px;width:43px;height:384px;background:linear-gradient(90deg,rgba(0,0,0,0),rgba(0,0,0,0.1) 55%,rgba(0,0,0,0.25) 85%,rgba(0,0,0,0.45))"></div><div class="a" style="left:683px;top:384px;width:1px;height:384px;background:#9a9c9e"></div></body></html>
